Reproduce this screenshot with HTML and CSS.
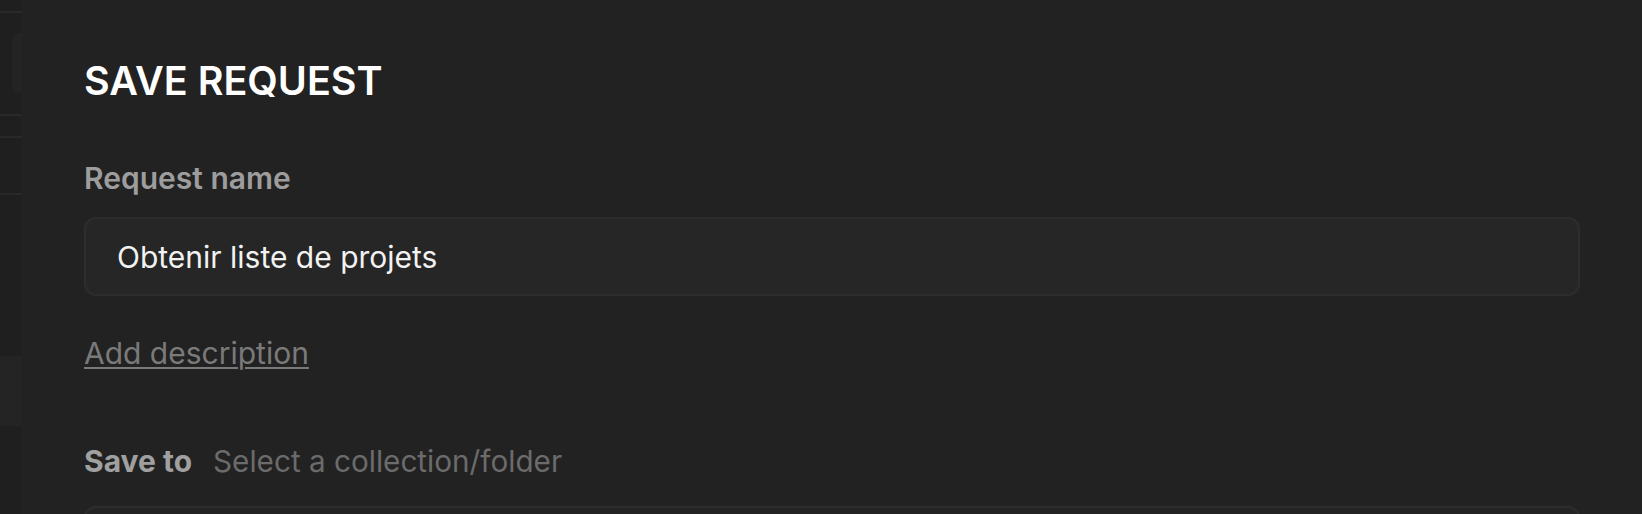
FILE: index.html
```html
<!DOCTYPE html>
<html lang="en">
<head>
<meta charset="utf-8">
<title>Save request</title>
<link rel="stylesheet" href="styles.css">
</head>
<body>
<div class="app">
  <aside class="backdrop">
    <div class="bd-top"></div>
    <div class="bd-line"></div>
    <div class="bd-pill"></div>
    <div class="bd-line l2"></div>
    <div class="bd-line l3"></div>
    <div class="bd-line l4"></div>
    <div class="bd-block"></div>
  </aside>
  <main class="modal">
    <h1 class="title">SAVE REQUEST</h1>
    <label class="label" for="req-name">Request name</label>
    <div class="input" id="req-name">Obtenir liste de projets</div>
    <a class="add-desc" href="#">Add description</a>
    <div class="save-row">
      <span class="save-label">Save to</span>
      <span class="save-hint">Select a collection/folder</span>
    </div>
    <div class="picker"></div>
  </main>
</div>
</body>
</html>
```
FILE: styles.css
```css
html, body {
  margin: 0;
  padding: 0;
  background: #222222;
  height: 100%;
  overflow: hidden;
}
body {
  font-family: Inter, "Noto Sans", sans-serif;
}
.app {
  display: flex;
  height: 514px;
  overflow: hidden;
}
.backdrop {
  width: 22px;
  flex: none;
  background: #1f1f1f;
  display: flex;
  flex-direction: column;
}
.bd-top {
  height: 11px;
}
.bd-line {
  height: 2px;
  background: #292929;
}
.bd-pill {
  margin: 20px 0 0 12px;
  height: 60px;
  background: #242424;
  border-radius: 8px 0 0 8px;
}
.bd-line.l2 { margin-top: 21px; }
.bd-line.l3 { margin-top: 20px; }
.bd-line.l4 { margin-top: 55px; }
.bd-block {
  margin-top: 161px;
  height: 70px;
  background: #242424;
}
.modal {
  flex: 1;
  padding: 0 62px 0 62px;
  background: #222222;
}
.title {
  margin: 57px 0 0;
  font-size: 39.5px;
  line-height: 48px;
  font-weight: 600;
  color: #ffffff;
}
.label {
  display: block;
  margin-top: 55px;
  font-size: 30px;
  line-height: 36px;
  font-weight: 600;
  color: #9d9d9d;
}
.input {
  margin-top: 21px;
  height: 75px;
  box-sizing: content-box;
  border: 2px solid #2d2d2d;
  border-radius: 12px;
  background: #262626;
  display: flex;
  align-items: center;
  padding-left: 31px;
  font-size: 30px;
  color: #f2f2f2;
}
.add-desc {
  display: inline-block;
  margin-top: 39px;
  font-size: 30px;
  line-height: 36px;
  color: #7a7a7a;
  text-decoration: underline;
  text-decoration-thickness: 2px;
  text-underline-offset: 3px;
}
.save-row {
  margin-top: 72px;
  display: flex;
  align-items: baseline;
  gap: 21px;
}
.save-label {
  font-size: 30px;
  line-height: 36px;
  font-weight: 700;
  color: #a0a0a0;
}
.save-hint {
  font-size: 29.7px;
  line-height: 36px;
  color: #6b6b6b;
}
.picker {
  margin-top: 27px;
  height: 60px;
  border: 2px solid #2d2d2d;
  border-radius: 12px;
  background: #242424;
}
```
